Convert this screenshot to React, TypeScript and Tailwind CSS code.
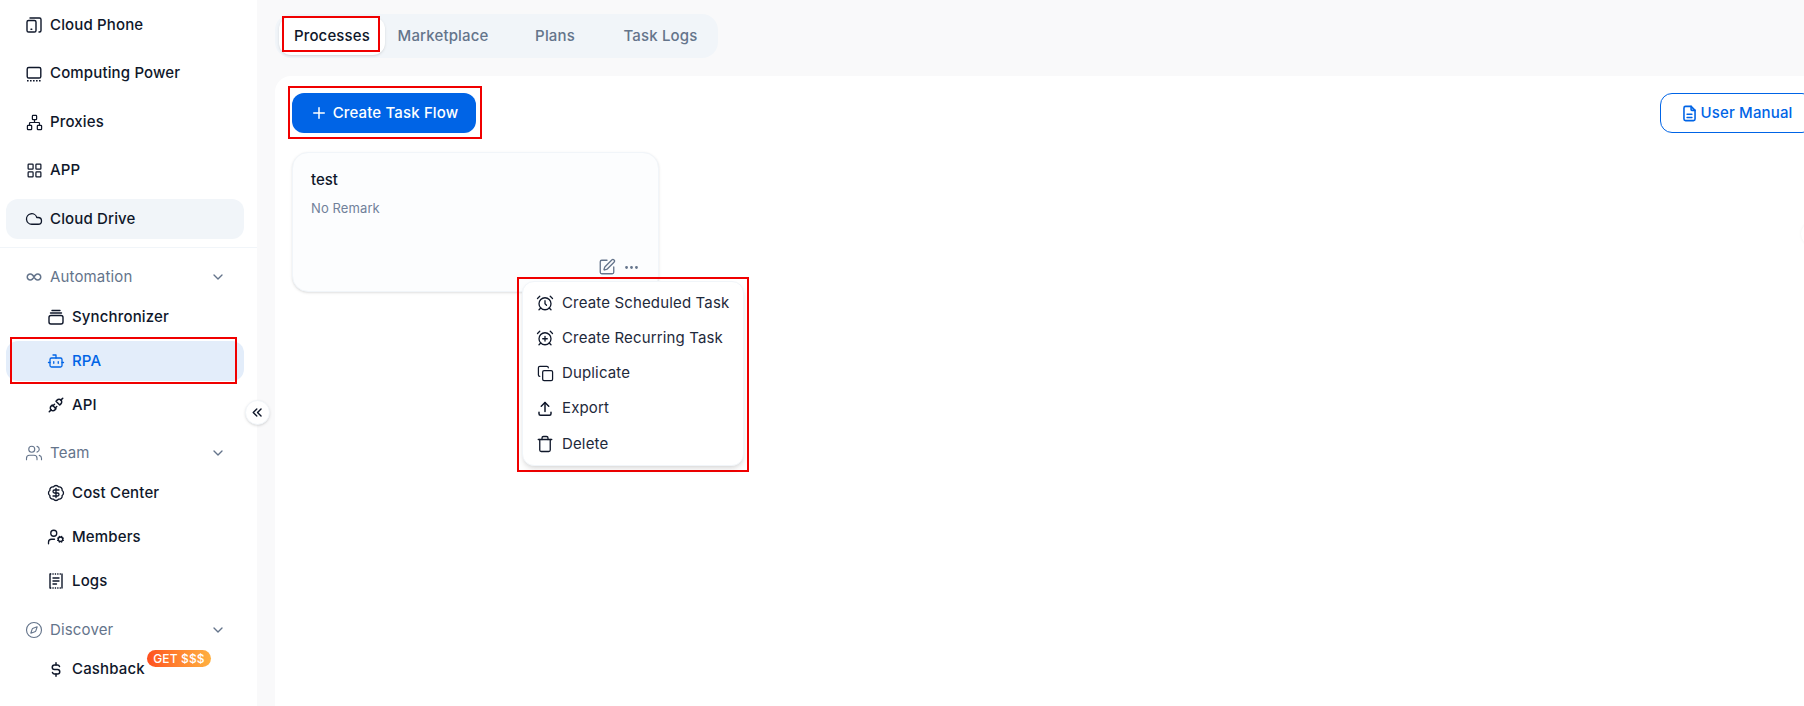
import React from 'react';
import { TbInfinity, TbPlugConnected, TbCurrencyDollar, TbDots, TbPlus, TbChevronDown, TbChevronsLeft, TbFileDescription, TbUpload } from 'react-icons/tb';
import {
  AlarmClock, AlarmClockPlus, BadgeDollarSign, Bot, Cloud, Compass, Copy, LayoutGrid, Network, SquarePen, Trash, UserCog, Users,
} from 'lucide-react';

const PhoneIcon = () => (
  <svg width="18" height="18" viewBox="0 0 18 18" fill="none" stroke="currentColor" strokeWidth="1.4" strokeLinecap="round" strokeLinejoin="round">
    <rect x="2" y="4.5" width="9" height="11.5" rx="1.6" />
    <path d="M5 2h9.5A1.5 1.5 0 0 1 16 3.5V14.5A1.5 1.5 0 0 1 14.5 16H14" />
    <path d="M6 13.2h.8" />
  </svg>
);

const ComputerIcon = () => (
  <svg width="18" height="18" viewBox="0 0 18 18" fill="none" stroke="currentColor" strokeWidth="1.4" strokeLinecap="round" strokeLinejoin="round">
    <rect x="2.2" y="2.5" width="13.6" height="10.5" rx="1.6" />
    <path d="M2 15.8h14" strokeDasharray="1.6 1.4" strokeLinecap="butt" />
  </svg>
);

const StackIcon = () => (
  <svg width="18" height="18" viewBox="0 0 18 18" fill="none" stroke="currentColor" strokeWidth="1.4" strokeLinecap="round" strokeLinejoin="round">
    <rect x="2" y="7.5" width="14" height="8.5" rx="2" />
    <path d="M3.5 5h11M5 2.5h8" />
  </svg>
);

const LogIcon = () => (
  <svg width="18" height="18" viewBox="0 0 18 18" fill="none" stroke="currentColor" strokeWidth="1.4" strokeLinecap="round" strokeLinejoin="round">
    <path d="M3 2v14M15 2v14" />
    <path d="M3 2h12M3 16h12" strokeDasharray="1.3 1.1" strokeLinecap="butt" />
    <path d="M6 6h6M6 9h6M6 12h3.5" />
  </svg>
);

const NavItem = ({ icon, label, active }: { icon: React.ReactNode; label: string; active?: boolean }) => (
  <div className={`flex h-[40px] items-center gap-[7px] rounded-xl pl-[19px] text-[15px] font-[450] tracking-[0.15px] text-[#0f172a] ${active ? 'bg-[#f1f5f9]' : ''}`}>
    <span className="flex w-[18px] justify-center">{icon}</span>
    {label}
  </div>
);

const SubItem = ({ icon, label, active, children }: { icon: React.ReactNode; label: string; active?: boolean; children?: React.ReactNode }) => (
  <div className={`relative flex h-[40px] items-center gap-[7px] rounded-xl pl-[41px] text-[15px] font-[450] tracking-[0.15px] ${active ? 'bg-[#e3edfa] text-[#0064e6]' : 'text-[#0f172a]'}`}>
    <span className="flex w-[18px] justify-center">{icon}</span>
    {label}
    {children}
  </div>
);

const GroupHeader = ({ icon, label }: { icon: React.ReactNode; label: string }) => (
  <div className="flex h-[40px] items-center gap-[7px] pl-[19px] pr-[18px] text-[15px] tracking-[0.15px] text-[#64748b]">
    <span className="flex w-[18px] justify-center">{icon}</span>
    <span className="flex-1">{label}</span>
    <TbChevronDown size={16} />
  </div>
);

const MenuRow = ({ icon, label }: { icon: React.ReactNode; label: string }) => (
  <div className="flex h-[35.2px] items-center gap-[8px] pl-[13px] text-[15px] tracking-[0.15px] text-[#1e293b]">
    <span className="flex w-[18px] justify-center text-[#0f172a]">{icon}</span>
    {label}
  </div>
);

const Tab = ({ label, active, width }: { label: string; active?: boolean; width: string }) => (
  <div className={`flex h-[38px] items-center justify-center rounded-xl text-[15px] font-[450] tracking-[0.15px] ${width} ${active ? 'bg-white text-[#0f172a] shadow-sm' : 'text-[#64748b]'}`}>
    {label}
  </div>
);

const RedBox = ({ className }: { className: string }) => (
  <div className={`pointer-events-none absolute border-2 border-[#f00000] ${className}`} />
);

export default function App() {
  return (
    <div className="relative flex h-[706px] w-[1804px] overflow-hidden bg-[#f9f9fa] font-['Inter',sans-serif]">
      <aside className="relative flex w-[257px] shrink-0 flex-col bg-white pl-[6px] pr-[13px] pt-[5px]">
        <div className="flex flex-col gap-[8.5px]">
          <NavItem icon={<PhoneIcon />} label="Cloud Phone" />
          <NavItem icon={<ComputerIcon />} label="Computing Power" />
          <NavItem icon={<Network size={17} strokeWidth={1.75} />} label="Proxies" />
          <NavItem icon={<LayoutGrid size={17} strokeWidth={1.75} />} label="APP" />
          <NavItem icon={<Cloud size={18} strokeWidth={1.75} />} label="Cloud Drive" active />
        </div>
        <div className="-ml-[6px] -mr-[13px] mb-[9px] mt-[8px] border-t border-[#f1f5f9]" />
        <GroupHeader icon={<TbInfinity size={18} />} label="Automation" />
        <div className="flex flex-col gap-[4px]">
          <SubItem icon={<StackIcon />} label="Synchronizer" />
          <SubItem icon={<Bot size={18} strokeWidth={1.75} />} label="RPA" active />
          <SubItem icon={<TbPlugConnected size={18} />} label="API" />
        </div>
        <div className="h-[8px]" />
        <GroupHeader icon={<Users size={18} strokeWidth={1.5} />} label="Team" />
        <div className="flex flex-col gap-[4px]">
          <SubItem icon={<BadgeDollarSign size={18} strokeWidth={1.75} />} label="Cost Center" />
          <SubItem icon={<UserCog size={18} strokeWidth={1.75} />} label="Members" />
          <SubItem icon={<LogIcon />} label="Logs" />
        </div>
        <div className="h-[9px]" />
        <GroupHeader icon={<Compass size={18} strokeWidth={1.5} />} label="Discover" />
        <div className="-mt-[1px]">
          <SubItem icon={<TbCurrencyDollar size={19} />} label="Cashback">
            <span className="absolute left-[141px] top-[1px] flex h-[17px] w-[64px] items-center justify-center rounded-full bg-gradient-to-r from-[#ff4f1f] to-[#ffb040] text-[12px] font-medium text-white">
              GET $$$
            </span>
          </SubItem>
        </div>
      </aside>

      <button className="absolute left-[245px] top-[400px] z-10 flex h-[25px] w-[25px] items-center justify-center rounded-full border border-[#f1f5f9] bg-white text-[#0f172a] shadow-sm">
        <TbChevronsLeft size={17} />
      </button>

      <main className="flex w-[1581px] shrink-0 flex-col pl-[18px] pt-[14px]">
        <div className="flex h-[44px] w-[443px] items-center gap-0 rounded-2xl bg-[#f1f5f9] pl-[4px]">
          <Tab label="Processes" active width="w-[106px]" />
          <Tab label="Marketplace" width="w-[116px]" />
          <Tab label="Plans" width="w-[108px]" />
          <Tab label="Task Logs" width="w-[103px]" />
        </div>
        <section className="relative mt-[18px] flex-1 rounded-tl-2xl bg-white pl-[17px] pr-[24px] pt-[17px]">
          <div className="flex items-center justify-between">
            <button className="flex h-[40px] w-[184px] items-center justify-center gap-[5px] rounded-xl bg-[#0064e6] text-[15px] font-[450] tracking-[0.15px] text-white">
              <TbPlus size={18} />
              Create Task Flow
            </button>
            <button className="flex h-[40px] w-[154px] items-center justify-center gap-[2px] rounded-xl border border-[#0064e6] pr-[2px] text-[15px] font-[450] tracking-[0.15px] text-[#0064e6]">
              <TbFileDescription size={19} />
              User Manual
            </button>
          </div>
          <div className="mt-[19px] flex h-[140px] w-[367px] flex-col rounded-2xl border border-[#f1f5f9] bg-[#fcfdfe] pb-[15px] pl-[18px] pr-[18px] pt-[17px] shadow-sm">
            <div className="text-[15px] font-[450] leading-[20px] text-[#0f172a]">test</div>
            <div className="mt-[9px] text-[13px] leading-[18px] tracking-[0.1px] text-[#71819a]">No Remark</div>
            <div className="mt-auto flex items-center justify-end gap-[7px] text-[#64748b]">
              <SquarePen size={18} strokeWidth={1.75} />
              <TbDots size={17} />
            </div>
          </div>
          <div className="absolute left-[247px] top-[205px] z-10 flex h-[185px] w-[222px] flex-col justify-center rounded-xl border border-[#f1f5f9] bg-white shadow-md">
            <MenuRow icon={<AlarmClock size={18} strokeWidth={1.75} />} label="Create Scheduled Task" />
            <MenuRow icon={<AlarmClockPlus size={18} strokeWidth={1.75} />} label="Create Recurring Task" />
            <MenuRow icon={<Copy size={17} strokeWidth={1.75} />} label="Duplicate" />
            <MenuRow icon={<TbUpload size={19} />} label="Export" />
            <MenuRow icon={<Trash size={18} strokeWidth={1.75} />} label="Delete" />
          </div>
          <div className="absolute left-[1526px] top-[146px] h-[24px] w-[24px] rounded-full bg-white shadow-[0_0_3px_rgba(0,0,0,0.06)]" />
        </section>
      </main>

      <RedBox className="left-[10px] top-[337px] h-[47px] w-[227px]" />
      <RedBox className="left-[282px] top-[16px] h-[36px] w-[98px]" />
      <RedBox className="left-[288px] top-[86px] h-[53px] w-[194px]" />
      <RedBox className="left-[517px] top-[277px] h-[195px] w-[232px]" />
    </div>
  );
}
